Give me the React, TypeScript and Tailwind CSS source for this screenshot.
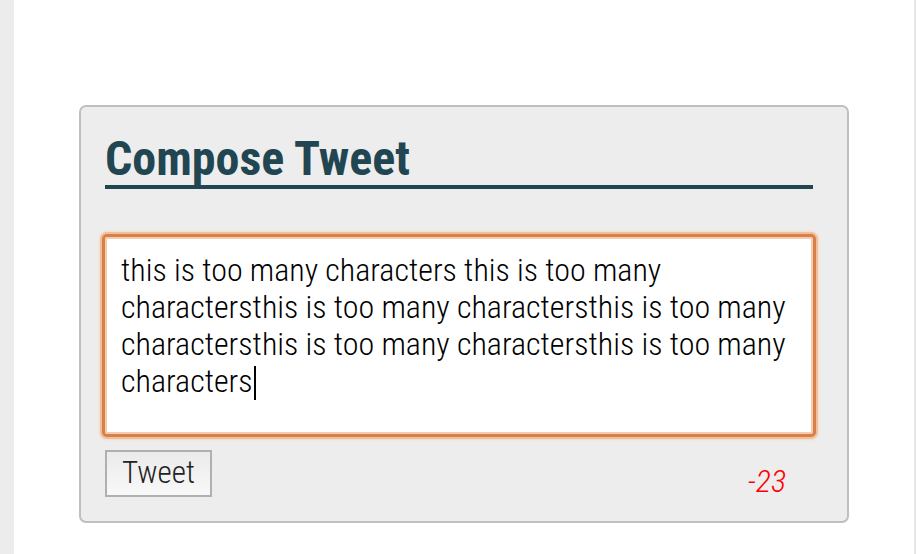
import React from "react";

export default function App() {
  const text =
    "this is too many characters this is too many charactersthis is too many charactersthis is too many charactersthis is too many charactersthis is too many characters";
  return (
    <div className="flex h-[554px] w-[916px] bg-white" style={{ fontFamily: '"Roboto Condensed", Roboto, sans-serif' }}>
      <div className="w-[14px] shrink-0 bg-[#ececec]" />
      <div className="flex flex-1 flex-col pl-[65px] pt-[105px]">
        <div className="flex h-[418px] w-[770px] flex-col rounded-[7px] border-2 border-[#c0c0c0] bg-[#ededed] pl-[24px] pr-[34px] pt-[26px]">
          <h1 className="border-b-4 border-[#214652] text-[48px] font-bold leading-[52px] text-[#214652]">
            Compose Tweet
          </h1>
          <div className="ml-[-3px] mr-[-3px] mt-[45px] h-[203px] rounded-[5px] border-[3px] border-[#d9804a] bg-white pl-[16px] pr-[10px] pt-[15px] shadow-[0_0_0_2px_#f0bf9b,0_0_2px_3px_#f7dcc8,inset_0_0_0_2px_#f4cdb1]">
            <p className="text-[32px] font-light leading-[37px] text-black">
              {text}
              <span className="ml-[1px] inline-block h-[34px] w-[2px] align-[-8px] bg-black" />
            </p>
          </div>
          <div className="mt-[13px] flex items-start justify-between pr-[27px]">
            <button className="flex h-[47px] w-[107px] items-center justify-center border-2 border-[#b0b0b0] bg-gradient-to-b from-[#ebebeb] to-[#f8f8f8] pb-[2px] text-[31px] font-light leading-[40px] text-[#222]">
              Tweet
            </button>
            <span className="mt-[12px] text-[32px] italic font-light leading-[38px] text-[#ff0000]">
              -23
            </span>
          </div>
        </div>
      </div>
      <div className="w-[2px] shrink-0 bg-[#e6e6e6]" />
    </div>
  );
}
